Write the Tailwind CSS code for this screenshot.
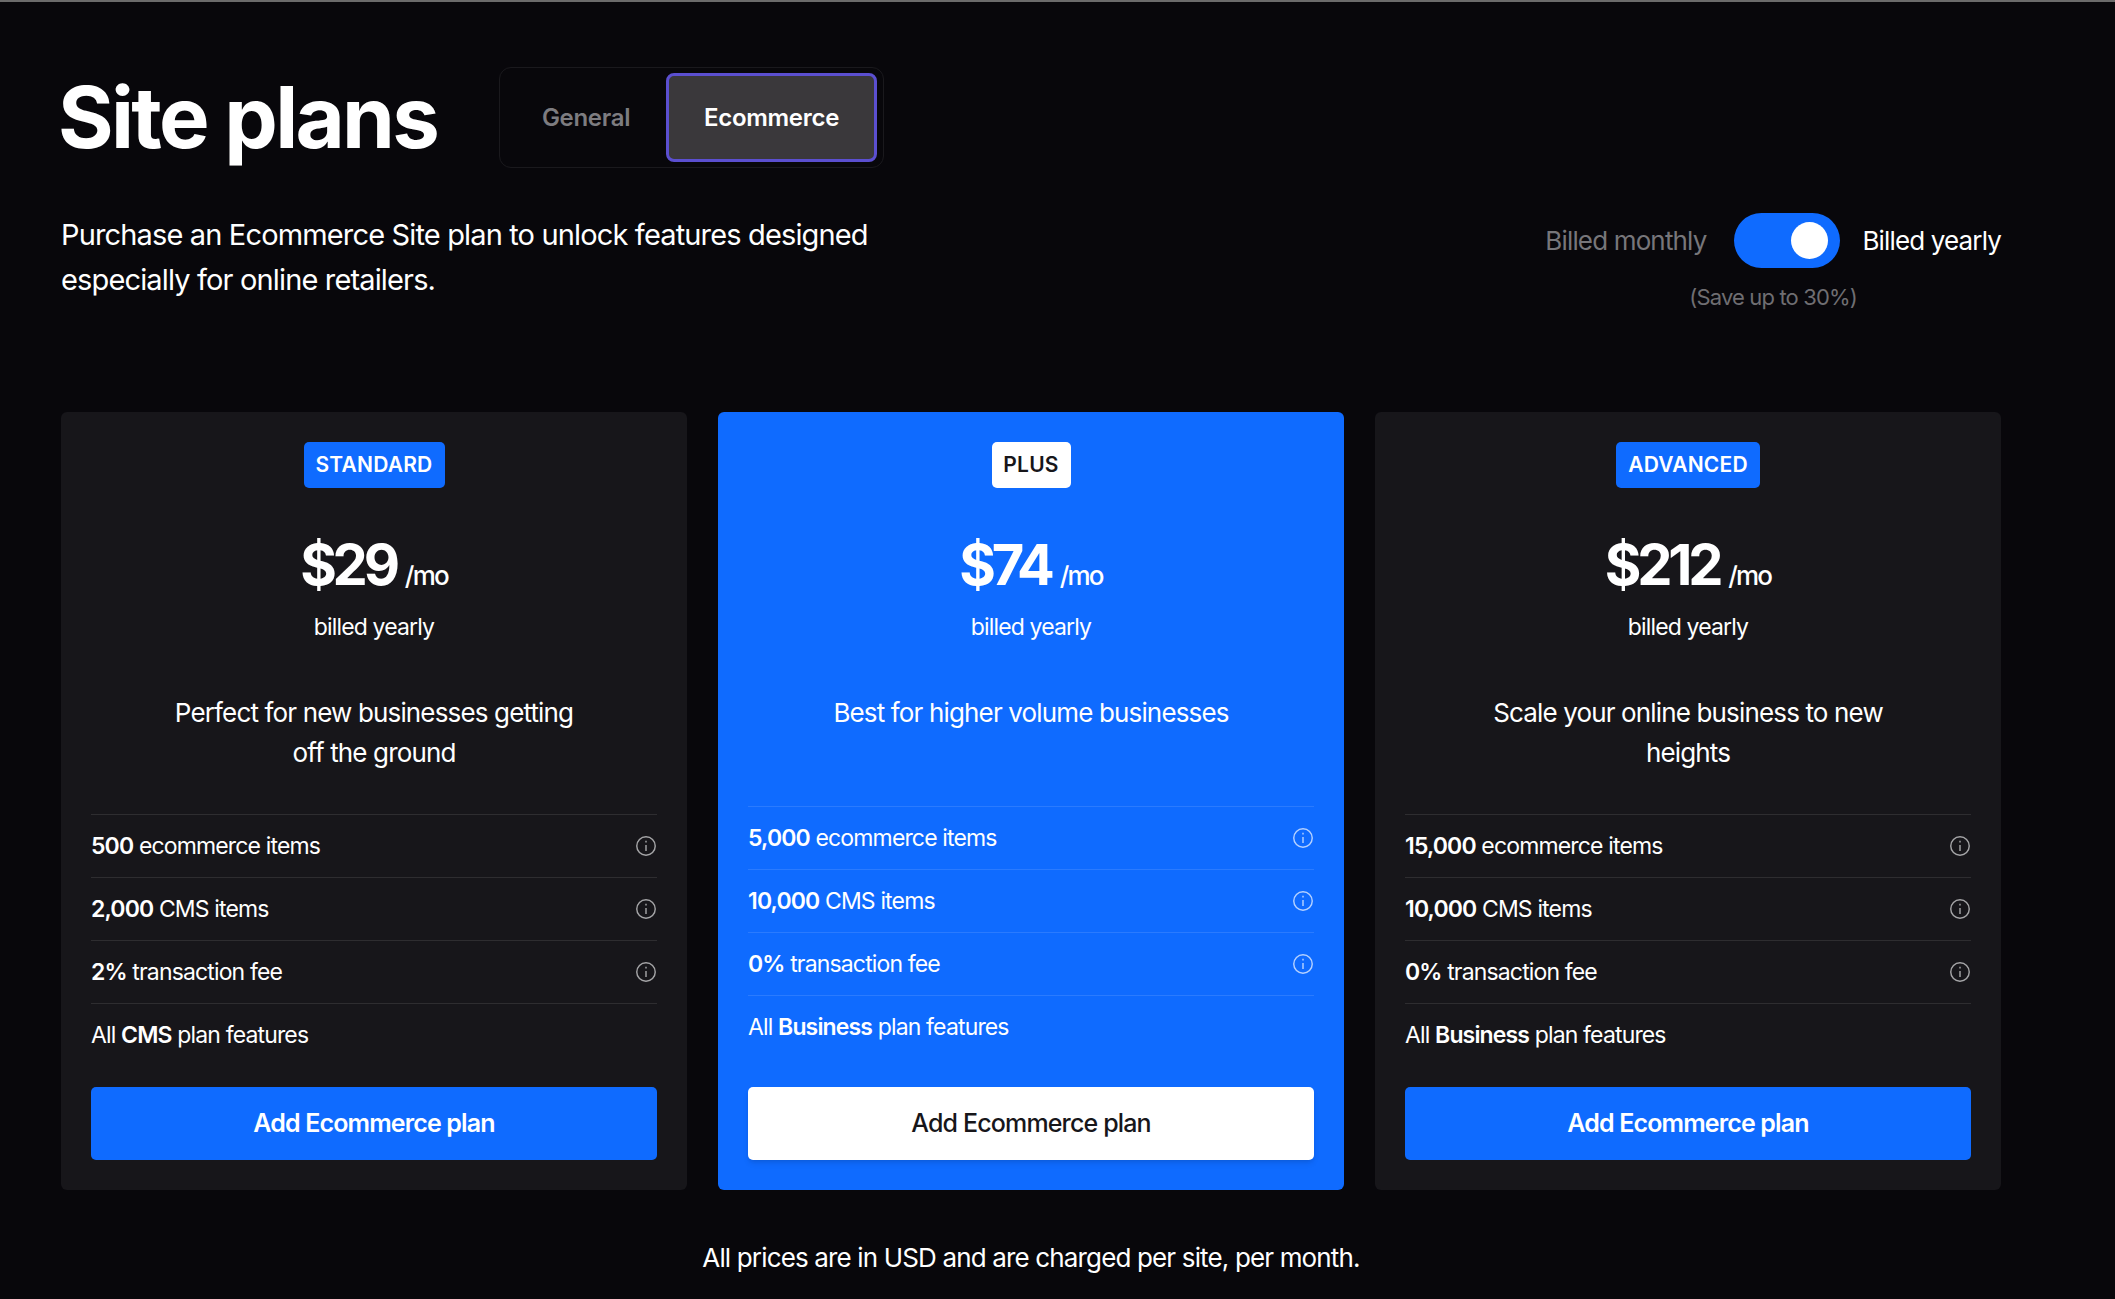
<!DOCTYPE html>
<html lang="en">

<head>
    <meta charset="UTF-8">
    <meta name="viewport" content="width=device-width, initial-scale=1.0">
    <title>Site plans</title>
    <script src="https://cdn.jsdelivr.net/npm/@tailwindcss/browser@4"></script>
</head>

<body class="bg-[#08070b] font-[Inter,sans-serif] tracking-[-0.85px] text-white">
    <div class="h-[1299px] overflow-hidden border-t-2 border-[#6b6b6b] pt-[65px] pr-[114px] pl-[61px]">

        <div class="flex items-center gap-[62px]">
            <h1 class="-ml-[3px] text-[85px] leading-[101px] font-bold tracking-[-2.7px]">Site plans</h1>
            <div class="flex h-[101px] w-[385px] items-center rounded-xl border border-[#1a191d] pr-[6px] pl-[6px] tracking-[-0.3px]">
                <button class="w-[160px] text-center text-[24px] font-semibold text-[#7d7c80]">General</button>
                <button class="h-[89px] w-[212px] rounded-lg border-[3px] border-[#5b4fd0] bg-[#3a383b] text-center text-[24px] font-semibold">Ecommerce</button>
            </div>
        </div>

        <div class="mt-[45px] flex h-[199px] items-start justify-between">
            <p class="text-[29px] leading-[44.5px]">Purchase an Ecommerce Site plan to unlock features designed<br>especially for online retailers.</p>
            <div class="flex flex-col items-center">
                <div class="flex h-[55px] items-center">
                    <span class="text-[26px] text-[#77767a]">Billed monthly</span>
                    <div class="mr-[22px] ml-[28px] flex h-[55px] w-[106px] items-center justify-end rounded-full bg-[#0f6bff] pr-[12px]">
                        <div class="h-[37px] w-[37px] rounded-full bg-white"></div>
                    </div>
                    <span class="text-[26px]">Billed yearly</span>
                </div>
                <p class="mt-[15px] text-[22px] leading-[28px] text-[#6f6e72]">(Save up to 30%)</p>
            </div>
        </div>

        <div class="grid grid-cols-3 gap-[31px]">

            <div class="flex flex-col rounded-md bg-[#17161a] px-[30px] pt-[30px] pb-[30px]">
                <div class="flex h-[46px] w-[141px] items-center justify-center self-center rounded-[5px] bg-[#0f6bff] text-[21px] font-semibold tracking-[0.2px]">STANDARD</div>
                <div class="mt-[48px] flex h-[58px] items-baseline justify-center gap-[9px] leading-[58px]">
                    <span class="text-[56px] font-bold tracking-[-4.2px]">$29</span>
                    <span class="text-[26px] font-medium tracking-[-1.8px]">/mo</span>
                </div>
                <p class="mt-[17px] text-center text-[23px] leading-[32px]">billed yearly</p>
                <p class="mt-[50px] mb-[42px] min-h-[71px] px-[70px] text-center text-[26px] leading-[39.5px]">Perfect for new businesses getting off the ground</p>
                <div class="mb-[21px] text-[23px]">
                    <div class="flex h-[63px] items-center justify-between border-t border-[#2e2d30]">
                        <span><b class="font-semibold">500</b> ecommerce items</span>
                        <svg class="h-[22px] w-[22px] text-[#a5a5a7]" viewBox="0 0 20 20" fill="none" stroke="currentColor" stroke-width="1.3"><circle cx="10" cy="10" r="8.4"/><path d="M10 9v5.5M10 5.2v1.6"/></svg>
                    </div>
                    <div class="flex h-[63px] items-center justify-between border-t border-[#2e2d30]">
                        <span><b class="font-semibold">2,000</b> CMS items</span>
                        <svg class="h-[22px] w-[22px] text-[#a5a5a7]" viewBox="0 0 20 20" fill="none" stroke="currentColor" stroke-width="1.3"><circle cx="10" cy="10" r="8.4"/><path d="M10 9v5.5M10 5.2v1.6"/></svg>
                    </div>
                    <div class="flex h-[63px] items-center justify-between border-t border-[#2e2d30]">
                        <span><b class="font-semibold">2%</b> transaction fee</span>
                        <svg class="h-[22px] w-[22px] text-[#a5a5a7]" viewBox="0 0 20 20" fill="none" stroke="currentColor" stroke-width="1.3"><circle cx="10" cy="10" r="8.4"/><path d="M10 9v5.5M10 5.2v1.6"/></svg>
                    </div>
                    <div class="flex h-[63px] items-center border-t border-[#2e2d30]">
                        <span>All <b class="font-semibold">CMS</b> plan features</span>
                    </div>
                </div>
                <button class="mt-auto h-[73px] rounded-[5px] bg-[#0f6bff] text-[25px] font-semibold">Add Ecommerce plan</button>
            </div>

            <div class="flex flex-col rounded-md bg-[#0f6bff] px-[30px] pt-[30px] pb-[30px]">
                <div class="flex h-[46px] w-[79px] items-center justify-center self-center rounded-[5px] bg-white text-[21px] font-semibold tracking-[0.2px] text-[#17161a]">PLUS</div>
                <div class="mt-[48px] flex h-[58px] items-baseline justify-center gap-[9px] leading-[58px]">
                    <span class="text-[56px] font-bold tracking-[-4.2px]">$74</span>
                    <span class="text-[26px] font-medium tracking-[-1.8px]">/mo</span>
                </div>
                <p class="mt-[17px] text-center text-[23px] leading-[32px]">billed yearly</p>
                <p class="mt-[50px] mb-[42px] min-h-[71px] px-[70px] text-center text-[26px] leading-[39.5px]">Best for higher volume businesses</p>
                <div class="mb-[21px] text-[23px]">
                    <div class="flex h-[63px] items-center justify-between border-t border-[#2a7bff]">
                        <span><b class="font-semibold">5,000</b> ecommerce items</span>
                        <svg class="h-[22px] w-[22px] text-[#b5d1ff]" viewBox="0 0 20 20" fill="none" stroke="currentColor" stroke-width="1.3"><circle cx="10" cy="10" r="8.4"/><path d="M10 9v5.5M10 5.2v1.6"/></svg>
                    </div>
                    <div class="flex h-[63px] items-center justify-between border-t border-[#2a7bff]">
                        <span><b class="font-semibold">10,000</b> CMS items</span>
                        <svg class="h-[22px] w-[22px] text-[#b5d1ff]" viewBox="0 0 20 20" fill="none" stroke="currentColor" stroke-width="1.3"><circle cx="10" cy="10" r="8.4"/><path d="M10 9v5.5M10 5.2v1.6"/></svg>
                    </div>
                    <div class="flex h-[63px] items-center justify-between border-t border-[#2a7bff]">
                        <span><b class="font-semibold">0%</b> transaction fee</span>
                        <svg class="h-[22px] w-[22px] text-[#b5d1ff]" viewBox="0 0 20 20" fill="none" stroke="currentColor" stroke-width="1.3"><circle cx="10" cy="10" r="8.4"/><path d="M10 9v5.5M10 5.2v1.6"/></svg>
                    </div>
                    <div class="flex h-[63px] items-center border-t border-[#2a7bff]">
                        <span>All <b class="font-semibold">Business</b> plan features</span>
                    </div>
                </div>
                <button class="mt-auto h-[73px] rounded-[5px] bg-white text-[25px] font-medium text-[#17161a] shadow-md">Add Ecommerce plan</button>
            </div>

            <div class="flex flex-col rounded-md bg-[#17161a] px-[30px] pt-[30px] pb-[30px]">
                <div class="flex h-[46px] w-[144px] items-center justify-center self-center rounded-[5px] bg-[#0f6bff] text-[21px] font-semibold tracking-[0.2px]">ADVANCED</div>
                <div class="mt-[48px] flex h-[58px] items-baseline justify-center gap-[9px] leading-[58px]">
                    <span class="text-[56px] font-bold tracking-[-4.2px]">$212</span>
                    <span class="text-[26px] font-medium tracking-[-1.8px]">/mo</span>
                </div>
                <p class="mt-[17px] text-center text-[23px] leading-[32px]">billed yearly</p>
                <p class="mt-[50px] mb-[42px] min-h-[71px] px-[70px] text-center text-[26px] leading-[39.5px]">Scale your online business to new heights</p>
                <div class="mb-[21px] text-[23px]">
                    <div class="flex h-[63px] items-center justify-between border-t border-[#2e2d30]">
                        <span><b class="font-semibold">15,000</b> ecommerce items</span>
                        <svg class="h-[22px] w-[22px] text-[#a5a5a7]" viewBox="0 0 20 20" fill="none" stroke="currentColor" stroke-width="1.3"><circle cx="10" cy="10" r="8.4"/><path d="M10 9v5.5M10 5.2v1.6"/></svg>
                    </div>
                    <div class="flex h-[63px] items-center justify-between border-t border-[#2e2d30]">
                        <span><b class="font-semibold">10,000</b> CMS items</span>
                        <svg class="h-[22px] w-[22px] text-[#a5a5a7]" viewBox="0 0 20 20" fill="none" stroke="currentColor" stroke-width="1.3"><circle cx="10" cy="10" r="8.4"/><path d="M10 9v5.5M10 5.2v1.6"/></svg>
                    </div>
                    <div class="flex h-[63px] items-center justify-between border-t border-[#2e2d30]">
                        <span><b class="font-semibold">0%</b> transaction fee</span>
                        <svg class="h-[22px] w-[22px] text-[#a5a5a7]" viewBox="0 0 20 20" fill="none" stroke="currentColor" stroke-width="1.3"><circle cx="10" cy="10" r="8.4"/><path d="M10 9v5.5M10 5.2v1.6"/></svg>
                    </div>
                    <div class="flex h-[63px] items-center border-t border-[#2e2d30]">
                        <span>All <b class="font-semibold">Business</b> plan features</span>
                    </div>
                </div>
                <button class="mt-auto h-[73px] rounded-[5px] bg-[#0f6bff] text-[25px] font-semibold">Add Ecommerce plan</button>
            </div>
        </div>

        <p class="mt-[48px] text-center text-[26px] leading-[40px]">All prices are in USD and are charged per site, per month.</p>
    </div>
</body>

</html>
